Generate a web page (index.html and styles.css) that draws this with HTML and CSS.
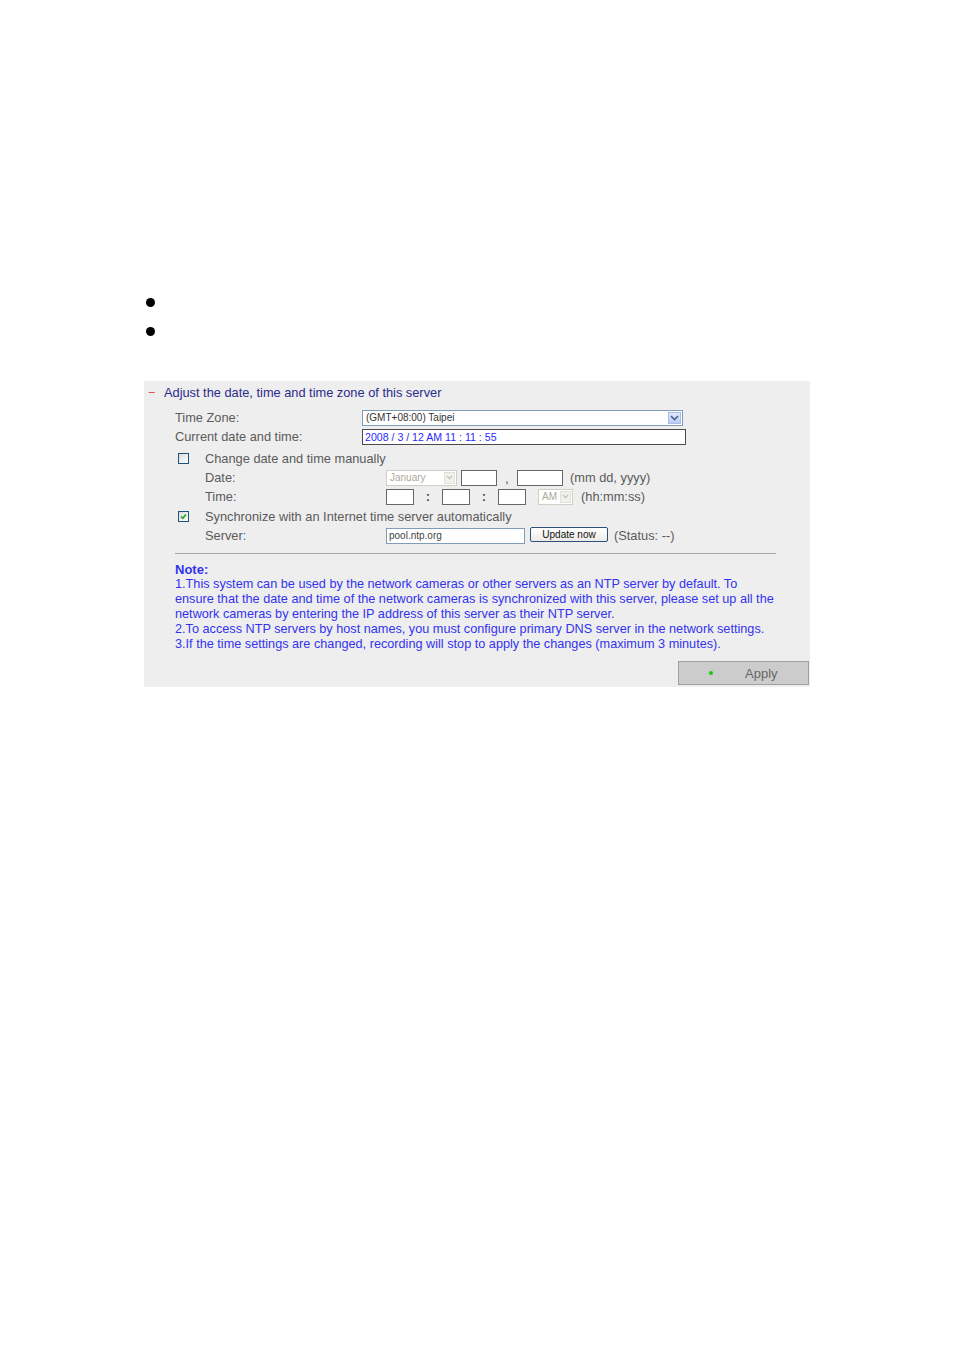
FILE: index.html
```html
<!DOCTYPE html>
<html lang="en">
<head>
<meta charset="utf-8">
<title>Date and Time</title>
<link rel="stylesheet" href="styles.css">
</head>
<body>
<div class="bullets">
  <span class="bullet"></span>
  <span class="bullet"></span>
</div>

<div class="panel">
  <div class="title"><span class="minus">&minus;</span><span>Adjust the date, time and time zone of this server</span></div>

  <div class="row r-tz">
    <span class="label">Time Zone:</span>
    <div class="select tz"><span class="sel-text">(GMT+08:00) Taipei</span><span class="arrow"><svg width="9" height="6" viewBox="0 0 9 6"><path d="M1 1 L4.5 4.5 L8 1" fill="none" stroke="#4d6185" stroke-width="1.6"/></svg></span></div>
  </div>

  <div class="row">
    <span class="label">Current date and time:</span>
    <div class="box now">2008 / 3 / 12 AM 11 : 11 : 55</div>
  </div>

  <div class="row r-check">
    <span class="check"></span>
    <span class="check-text">Change date and time manually</span>
  </div>

  <div class="row sub">
    <span class="sublabel">Date:</span>
    <div class="select dis month"><span class="sel-text">January</span><span class="arrow"><svg width="7" height="5" viewBox="0 0 7 5"><path d="M1 1 L3.5 3.5 L6 1" fill="none" stroke="#c4c2b8" stroke-width="1.3"/></svg></span></div>
    <span class="field w36"></span>
    <span class="sep comma">,</span>
    <span class="field w46"></span>
    <span class="hint">(mm dd, yyyy)</span>
  </div>

  <div class="row sub">
    <span class="sublabel">Time:</span>
    <span class="field w28"></span>
    <span class="sep colon">:</span>
    <span class="field w28"></span>
    <span class="sep colon">:</span>
    <span class="field w28"></span>
    <div class="select dis ampm"><span class="sel-text">AM</span><span class="arrow"><svg width="7" height="5" viewBox="0 0 7 5"><path d="M1 1 L3.5 3.5 L6 1" fill="none" stroke="#c4c2b8" stroke-width="1.3"/></svg></span></div>
    <span class="hint">(hh:mm:ss)</span>
  </div>

  <div class="row r-sync">
    <span class="check checked"><svg width="9" height="9" viewBox="0 0 9 9"><path d="M2 4.5 L3.8 6.3 L7 2.5" fill="none" stroke="#21a121" stroke-width="1.6"/></svg></span>
    <span class="check-text">Synchronize with an Internet time server automatically</span>
  </div>

  <div class="row sub">
    <span class="sublabel">Server:</span>
    <div class="box server">pool.ntp.org</div>
    <span class="btn-update">Update now</span>
    <span class="status">(Status: --)</span>
  </div>

  <div class="rule"></div>

  <div class="note">
    <div class="note-title">Note:</div>
    <div>1.This system can be used by the network cameras or other servers as an NTP server by default. To</div>
    <div>ensure that the date and time of the network cameras is synchronized with this server, please set up all the</div>
    <div>network cameras by entering the IP address of this server as their NTP server.</div>
    <div>2.To access NTP servers by host names, you must configure primary DNS server in the network settings.</div>
    <div>3.If the time settings are changed, recording will stop to apply the changes (maximum 3 minutes).</div>
  </div>

  <div class="actions">
    <span class="apply"><span class="dot"></span><span class="apply-text">Apply</span></span>
  </div>
</div>
</body>
</html>
```

FILE: styles.css
```css
html, body {
  margin: 0;
  padding: 0;
  background: #ffffff;
}

body {
  font-family: "Liberation Sans", Arial, sans-serif;
  width: 954px;
  height: 1350px;
}

.bullets {
  padding-top: 298px;
  padding-left: 146px;
  display: flex;
  flex-direction: column;
  gap: 20px;
}

.bullet {
  width: 9px;
  height: 9px;
  border-radius: 50%;
  background: #000;
  display: block;
}

.panel {
  margin-top: 45px;
  margin-left: 144px;
  width: 666px;
  height: 306px;
  background: #eeeeee;
  box-sizing: border-box;
}

.title {
  height: 22px;
  display: flex;
  align-items: center;
  font-size: 12.8px;
  color: #2b2b8c;
  margin-bottom: 5px;
}

.minus {
  color: #e8505a;
  width: 20px;
  padding-left: 4px;
  box-sizing: border-box;
}

.row {
  height: 19px;
  display: flex;
  align-items: center;
  padding-left: 31px;
  font-size: 12.8px;
  color: #5a5a5a;
}

.label {
  width: 187px;
  flex: none;
}

.select {
  height: 16px;
  box-sizing: border-box;
  border: 1px solid #7f9db9;
  background: #fff;
  display: flex;
  align-items: center;
  justify-content: space-between;
  font-size: 10px;
  color: #333;
}

.sel-text {
  padding-left: 3px;
}

.tz {
  width: 321px;
}

.tz .arrow {
  width: 13px;
  height: 12px;
  margin-right: 1px;
  background: linear-gradient(#dfe8fb, #b9cdf5);
  border: 1px solid #a9bde6;
  box-sizing: border-box;
  display: flex;
  align-items: center;
  justify-content: center;
}

.box {
  height: 16px;
  box-sizing: border-box;
  background: #fff;
  font-size: 10px;
  display: flex;
  align-items: center;
  padding-left: 2px;
}

.now {
  width: 324px;
  border: 1px solid #4a4a4a;
  color: #2a2aff;
  font-size: 10.6px;
}

.r-check {
  margin-top: 3px;
  padding-left: 34px;
}

.r-sync {
  margin-top: 1px;
  padding-left: 34px;
}

.check {
  width: 11px;
  height: 11px;
  box-sizing: border-box;
  border: 1px solid #1c5180;
  background: linear-gradient(135deg, #dcdcd6, #ffffff);
  margin-right: 16px;
  flex: none;
  display: flex;
  align-items: center;
  justify-content: center;
}

.check-text {
  color: #5a5a5a;
}

.sub {
  padding-left: 61px;
}

.sublabel {
  width: 181px;
  flex: none;
}

.dis {
  border-color: #d0cfc6;
  color: #aca899;
}

.dis .arrow {
  width: 11px;
  height: 12px;
  margin-right: 1px;
  background: #f2f1ec;
  border: 1px solid #e0dfd8;
  box-sizing: border-box;
  display: flex;
  align-items: center;
  justify-content: center;
}

.month {
  width: 71px;
  margin-right: 4px;
}

.ampm {
  width: 35px;
  margin-left: 12px;
  margin-right: 8px;
}

.field {
  height: 16px;
  box-sizing: border-box;
  border: 1px solid #666;
  background: #fff;
  display: block;
}

.w36 { width: 36px; }
.w46 { width: 46px; }
.w28 { width: 28px; }

.sep {
  color: #444;
  font-size: 12px;
  text-align: center;
}

.comma {
  width: 20px;
  position: relative;
  top: 1px;
}

.colon {
  width: 28px;
  font-weight: bold;
}

.w46 + .hint {
  margin-left: 7px;
}

.hint {
  color: #5a5a5a;
}

.server {
  width: 139px;
  border: 1px solid #7f9db9;
  color: #444;
}

.btn-update {
  margin-left: 5px;
  width: 78px;
  height: 15px;
  box-sizing: border-box;
  border: 1px solid #2d4f7c;
  border-radius: 2px;
  background: linear-gradient(#ffffff, #ecebe6);
  font-size: 10px;
  color: #111;
  display: flex;
  align-items: center;
  justify-content: center;
  margin-top: -2px;
}

.status {
  margin-left: 6px;
}

.rule {
  margin-top: 8px;
  margin-left: 31px;
  width: 601px;
  height: 1px;
  background: #a8a8a8;
}

.note {
  margin-top: 8px;
  padding-left: 31px;
  font-size: 12.7px;
  line-height: 15px;
  color: #3333ee;
  white-space: nowrap;
}

.note-title {
  font-weight: bold;
  font-size: 13px;
}

.actions {
  display: flex;
  justify-content: flex-end;
  margin-top: 9px;
  padding-right: 1px;
}

.apply {
  width: 131px;
  height: 24px;
  box-sizing: border-box;
  background: #cccccc;
  border: 1px solid #a0a0a0;
  display: flex;
  align-items: center;
}

.dot {
  width: 4px;
  height: 4px;
  border-radius: 50%;
  background: #11cc11;
  margin-left: 30px;
}

.apply-text {
  margin-left: 32px;
  font-size: 13px;
  color: #666;
}
```
